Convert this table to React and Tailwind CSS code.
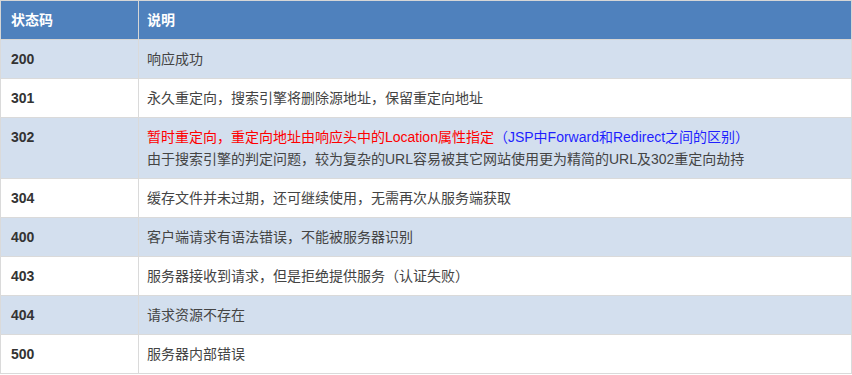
import React from 'react';

const rows = [
  { code: '200', text: '响应成功' },
  { code: '301', text: '永久重定向，搜索引擎将删除源地址，保留重定向地址' },
  { code: '302', special: true },
  { code: '304', text: '缓存文件并未过期，还可继续使用，无需再次从服务端获取' },
  { code: '400', text: '客户端请求有语法错误，不能被服务器识别' },
  { code: '403', text: '服务器接收到请求，但是拒绝提供服务（认证失败）' },
  { code: '404', text: '请求资源不存在' },
  { code: '500', text: '服务器内部错误' },
];

export default function App() {
  return (
    <div className="w-[852px] h-[375px] bg-white" style={{ fontFamily: '"Liberation Sans", "Noto Sans CJK SC", sans-serif' }}>
      <table className="w-[852px] table-fixed border-collapse text-[14px] leading-[22px] text-[#444]">
        <colgroup>
          <col className="w-[138px]" />
          <col />
        </colgroup>
        <thead>
          <tr className="bg-[#4f81bd] text-white">
            <th className="border border-[#d6d6d6] h-[39px] px-[10px] text-left font-bold">状态码</th>
            <th className="border border-[#d6d6d6] px-[8px] text-left font-bold">说明</th>
          </tr>
        </thead>
        <tbody>
          {rows.map((r, i) => (
            <tr key={r.code} className={i % 2 === 0 ? 'bg-[#d3dfee]' : 'bg-white'}>
              <td className="border border-[#dadada] px-[10px] py-[8px] align-top font-bold text-[#333]">{r.code}</td>
              <td className="border border-[#dadada] px-[8px] py-[8px]">
                {r.special ? (
                  <>
                    <div>
                      <span className="text-[#ff0000]">暂时重定向，重定向地址由响应头中的Location属性指定</span>
                      <span className="text-[#1f1fff]">（JSP中Forward和Redirect之间的区别）</span>
                    </div>
                    <div>由于搜索引擎的判定问题，较为复杂的URL容易被其它网站使用更为精简的URL及302重定向劫持</div>
                  </>
                ) : (
                  r.text
                )}
              </td>
            </tr>
          ))}
        </tbody>
      </table>
    </div>
  );
}
